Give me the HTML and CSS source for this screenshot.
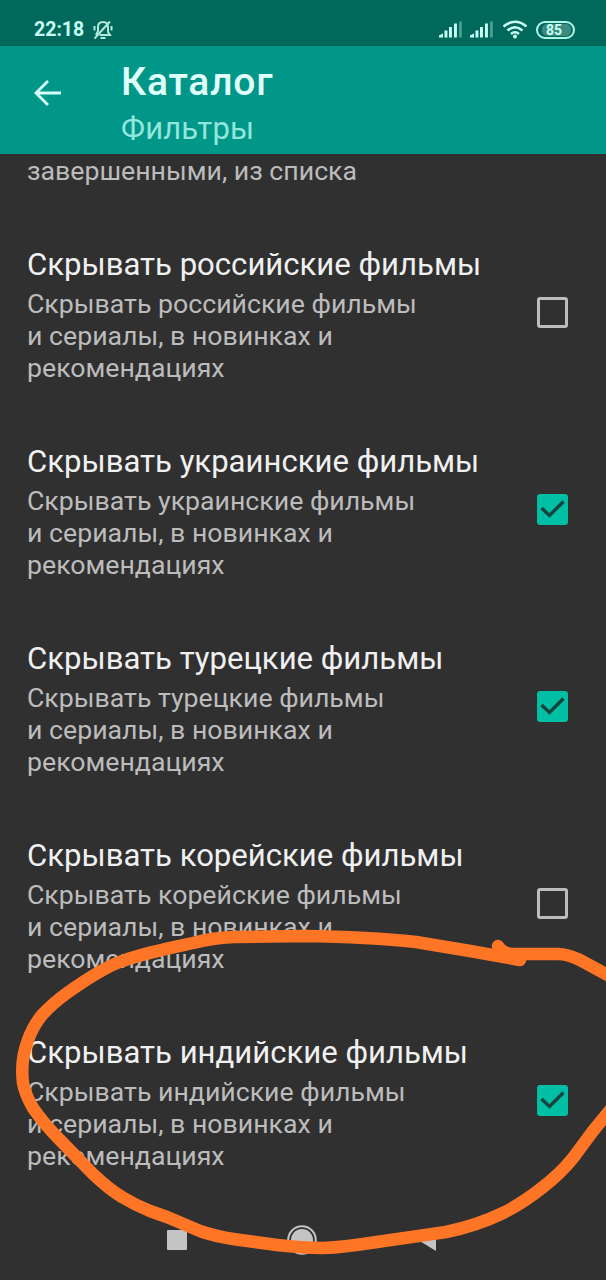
FILE: index.html
```html
<!DOCTYPE html>
<html lang="ru">

<head>
    <meta charset="UTF-8">
    <meta name="viewport" content="width=device-width, initial-scale=1.0">
    <title>Каталог</title>
    <link rel="stylesheet" href="styles.css">
</head>

<body>
    <div class="screen">
        <div class="status-bar">
            <span class="time">22:18</span>
            <svg class="bell" width="22" height="20" viewBox="0 0 22 20">
                <path d="M7.500 15H18l-2-3V7c0-3-2-5-5-5S6 4 6 7v4l-2 4" />
                <path d="M8.500 18h5M2.500 6v4.500M19.500 6v4.500M18 1.500L2.500 18.500" />
            </svg>
            <div class="status-icons">
                <svg class="signal" width="24" height="17" viewBox="0 0 24 17">
                    <path d="M0 16.500v-2l4-2v4zM5.500 16.500v-7h2.900v7zM10 16.500v-10.500h2.900v10.500zM15 16.500v-14h2.900v14z" />
                    <path class="dim" d="M20 16.500v-16h2.900v16z" />
                </svg>
                <svg class="signal signal-second" width="24" height="17" viewBox="0 0 24 17">
                    <path d="M0 16.500v-2l4-2v4zM5.500 16.500v-7h2.900v7zM10 16.500v-10.500h2.900v10.500zM15 16.500v-14h2.900v14z" />
                    <path class="dim" d="M20 16.500v-16h2.900v16z" />
                </svg>
                <svg class="wifi" width="26" height="19" viewBox="0 0 26 19">
                    <path d="M1.500 6.500Q13-3 24.500 6.500M5.500 10.500Q13 4 20.500 10.500M9 14Q13 10.500 17 14" />
                    <circle cx="13" cy="16.500" r="2" />
                </svg>
                <span class="battery"><span class="battery-level">85</span></span>
            </div>
        </div>

        <header class="toolbar">
            <svg class="back" width="28" height="28" viewBox="0 0 28 28">
                <path d="M28 14H3M15 2L3 14l12 12" />
            </svg>
            <div class="headings">
                <h1>Каталог</h1>
                <h2>Фильтры</h2>
            </div>
        </header>

        <main class="settings">
            <p class="cut-text">завершенными, из списка</p>

            <div class="item">
                <div class="item-text">
                    <h3>Скрывать российские фильмы</h3>
                    <p>Скрывать российские фильмы<br>и сериалы, в новинках и<br>рекомендациях</p>
                </div>
                <div class="checkbox"></div>
            </div>

            <div class="item">
                <div class="item-text">
                    <h3>Скрывать украинские фильмы</h3>
                    <p>Скрывать украинские фильмы<br>и сериалы, в новинках и<br>рекомендациях</p>
                </div>
                <div class="checkbox checked">
                    <svg width="31" height="31" viewBox="0 0 31 31"><path d="M4.500 14l8 7.500L26.500 7.500" /></svg>
                </div>
            </div>

            <div class="item">
                <div class="item-text">
                    <h3>Скрывать турецкие фильмы</h3>
                    <p>Скрывать турецкие фильмы<br>и сериалы, в новинках и<br>рекомендациях</p>
                </div>
                <div class="checkbox checked">
                    <svg width="31" height="31" viewBox="0 0 31 31"><path d="M4.500 14l8 7.500L26.500 7.500" /></svg>
                </div>
            </div>

            <div class="item">
                <div class="item-text">
                    <h3>Скрывать корейские фильмы</h3>
                    <p>Скрывать корейские фильмы<br>и сериалы, в новинках и<br>рекомендациях</p>
                </div>
                <div class="checkbox"></div>
            </div>

            <div class="item">
                <div class="item-text">
                    <h3>Скрывать индийские фильмы</h3>
                    <p>Скрывать индийские фильмы<br>и сериалы, в новинках и<br>рекомендациях</p>
                </div>
                <div class="checkbox checked">
                    <svg width="31" height="31" viewBox="0 0 31 31"><path d="M4.500 14l8 7.500L26.500 7.500" /></svg>
                </div>
            </div>
        </main>

        <nav class="nav-bar">
            <svg width="20" height="20" viewBox="0 0 20 20"><rect width="20" height="20" rx="1" /></svg>
            <svg width="30" height="30" viewBox="0 0 30 30">
                <circle class="ring" cx="15" cy="15" r="13.800" />
                <circle cx="15" cy="15" r="11" />
            </svg>
            <svg width="20" height="22" viewBox="0 0 20 22"><path d="M20 0v22L2 11z" /></svg>
        </nav>

        <!-- orange marker -->
        <svg class="marker" width="606" height="1280" viewBox="0 0 606 1280">
            <path d="M520 960L470 951L416 942Q370 937 303 936L233 937Q212 938 193 943C165 949 140 954 117 963C100 970 84 981 67 993Q52 1004 42 1015Q33 1026 28 1040C23 1053 21 1067 23 1083Q25 1094 33 1108Q44 1124 60 1140L93 1174Q110 1190 122 1197Q135 1205 150 1211L167 1217L200 1231Q214 1236 233 1239L277 1245Q303 1248 323 1248Q345 1247 370 1243L446 1232Q476 1226 503 1213Q523 1203 543 1187Q560 1174 573 1158L593 1131L616 1103" />
            <path d="M498 946Q503 954 513 954H558Q567 954 580 960L615 979" />
        </svg>
    </div>
</body>

</html>
```
FILE: styles.css
```css
* {
    box-sizing: border-box;
}

body {
    margin: 0;
    background: #303030;
    font-family: Roboto, "Noto Sans", sans-serif;
    overflow: hidden;
}

h1, h2, h3, p {
    margin: 0;
    font-weight: 400;
    white-space: nowrap;
}

.screen {
    position: relative;
    display: flex;
    flex-direction: column;
    width: 606px;
    height: 1280px;
    overflow: hidden;
}

.status-bar {
    display: flex;
    align-items: center;
    height: 46px;
    padding: 13px 31px 0 34px;
    background: #00695c;
    color: #c9fff5;
}

.time {
    font-size: 19.5px;
    font-weight: 700;
    line-height: 32px;
}

.bell {
    margin-left: 8px;
    fill: none;
    stroke: #b5e8de;
    stroke-width: 2;
}

.status-icons {
    display: flex;
    align-items: center;
    margin-left: auto;
}

.signal {
    fill: #c9fff5;
}

.signal-second {
    margin-left: 7px;
}

.dim {
    opacity: 0.35;
}

.wifi {
    margin-left: 8px;
    fill: #c9fff5;
}

.wifi path {
    fill: none;
    stroke: #c9fff5;
    stroke-width: 2.6;
}

.battery {
    width: 39px;
    height: 18px;
    margin-left: 8px;
    padding: 1px;
    border: 2px solid #b2f5e8;
    border-radius: 9px;
}

.battery-level {
    display: block;
    width: 29px;
    margin-left: 3px;
    padding-right: 5px;
    border-radius: 5px;
    background: #3d8a7f;
    font-size: 14px;
    font-weight: 700;
    line-height: 12px;
    text-align: center;
}

.toolbar {
    display: flex;
    height: 108px;
    padding: 15px 34px 0 33px;
    background: #009688;
}

.back {
    margin-top: 18px;
    fill: none;
    stroke: #d8fffa;
    stroke-width: 2.8;
}

.headings {
    margin-left: 60px;
}

h1 {
    color: #e0fffb;
    font-size: 39px;
    font-weight: 500;
    line-height: 42px;
    letter-spacing: 0.8px;
}

h2 {
    margin-top: 9px;
    color: #93e6dc;
    font-size: 31px;
    line-height: 34px;
    letter-spacing: 0.2px;
}

.settings {
    height: 1046px;
    padding: 0 38px 0 27px;
    color: #bcbcbc;
}

.cut-text {
    height: 60px;
    font-size: 26.7px;
    line-height: 34px;
}

.item {
    display: flex;
    align-items: center;
    justify-content: space-between;
    height: 197px;
}

.item-text {
    padding-top: 3px;
}

.item h3 {
    color: #f0f0f0;
    font-size: 31.1px;
    line-height: 40px;
}

.item p {
    padding-top: 3px;
    font-size: 26.7px;
    line-height: 32px;
}

.checkbox {
    width: 31px;
    height: 31px;
    border: 3px solid #bcbcbc;
    border-radius: 3px;
}

.checkbox.checked {
    border: none;
    background: #00bfa5;
}

.checkbox path {
    fill: none;
    stroke: #17423d;
    stroke-width: 3.4;
}

.nav-bar {
    display: flex;
    align-items: center;
    justify-content: space-between;
    height: 80px;
    padding: 0 170px 0 167px;
    fill: #c4c4c4;
}

.ring {
    fill: none;
    stroke: #c4c4c4;
    stroke-width: 2;
}

.marker {
    position: absolute;
    top: 0;
    left: 0;
    fill: none;
    stroke: #ff7526;
    stroke-width: 12.5;
    stroke-linecap: round;
    stroke-linejoin: round;
}
```
